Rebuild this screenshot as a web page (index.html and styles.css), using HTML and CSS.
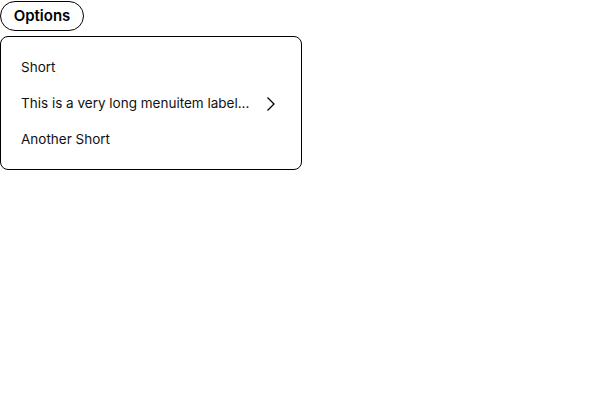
FILE: index.html
```html
<!DOCTYPE html>
<html>
<head>
<meta charset="utf-8">
<link rel="stylesheet" href="styles.css">
</head>
<body>
<div class="wrap">
  <button class="trigger">Options</button>
  <div class="menu" role="menu">
    <div class="item" role="menuitem">Short</div>
    <div class="item" role="menuitem"><span class="label">This is a very long menuitem label...</span>
      <svg class="chev" width="16" height="16" viewBox="0 0 16 16"><path d="M4.5 1.5 L11 8 L4.5 14.5" fill="none" stroke="#000" stroke-width="1.3"/></svg>
    </div>
    <div class="item" role="menuitem">Another Short</div>
  </div>
</div>
</body>
</html>
```
FILE: styles.css
```css
html, body { margin: 0; padding: 0; background: #fff; }
body { font-family: "Inter", sans-serif; color: #111; }
.wrap { display: flex; flex-direction: column; align-items: flex-start; gap: 5px; padding-top: 1px; }
.trigger {
  font-family: "Inter", sans-serif; font-size: 15px; font-weight: 600; color: #000;
  height: 30px; width: 84px; padding: 0; background: #fff;
  border: 1px solid #000; border-radius: 15px; line-height: 28px;
}
.menu {
  width: 302px; box-sizing: border-box; border: 1px solid #000; border-radius: 8px;
  padding: 12px 0; display: flex; flex-direction: column;
}
.item {
  box-sizing: border-box; height: 36px; display: flex; align-items: center; justify-content: space-between;
  padding: 2px 22px 0 20px; font-size: 13.5px; color: #111; line-height: 1;
}
.chev { display: block; }
```
